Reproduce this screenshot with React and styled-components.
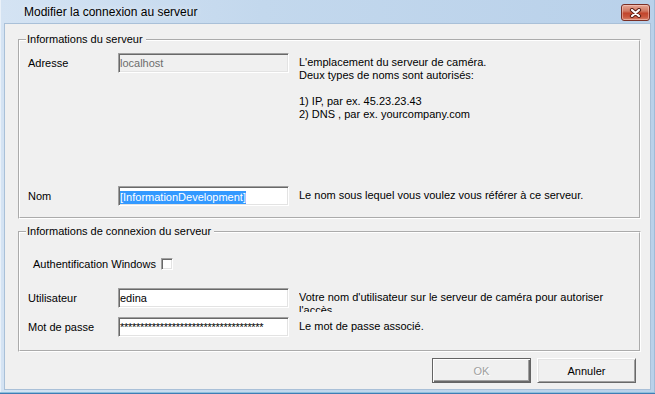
import React from "react";
import styled, { createGlobalStyle } from "styled-components";

const GlobalStyle = createGlobalStyle`
  html, body {
    margin: 0;
    padding: 0;
    background: #fff;
  }
  body {
    font-family: "Liberation Sans", Arial, sans-serif;
    font-size: 11px;
    color: #000;
  }
  * {
    box-sizing: border-box;
  }
`;

function CloseGlyph() {
  return (
    <svg width="13" height="10" viewBox="0 0 13 10">
      <path d="M3 2 L10 8 M10 2 L3 8" stroke="#5a1d14" strokeWidth="4.2" strokeLinecap="round" fill="none" />
      <path d="M3 2 L10 8 M10 2 L3 8" stroke="#ffffff" strokeWidth="2.2" strokeLinecap="round" fill="none" />
    </svg>
  );
}

function App() {
  return (
    <>
      <GlobalStyle />
      <Window>
        <TitleBar>
          <Title>Modifier la connexion au serveur</Title>
          <CloseButton>
            <CloseGlyph />
          </CloseButton>
        </TitleBar>

        <Client>
          <GroupBox $height={186}>
            <Legend>Informations du serveur</Legend>
            <GroupBody $top={7}>
              <Row>
                <Label>Adresse</Label>
                <Field $disabled>localhost</Field>
                <Desc>
                  L'emplacement du serveur de caméra.
                  <br />
                  Deux types de noms sont autorisés:
                  <br />
                  <br />
                  1) IP, par ex. 45.23.23.43
                  <br />
                  2) DNS , par ex. yourcompany.com
                </Desc>
              </Row>
              <Row $gap={65}>
                <Label>Nom</Label>
                <Field>
                  <Selection>[InformationDevelopment]</Selection>
                </Field>
                <Desc>Le nom sous lequel vous voulez vous référer à ce serveur.</Desc>
              </Row>
            </GroupBody>
          </GroupBox>

          <GroupBox $height={127}>
            <Legend>Informations de connexion du serveur</Legend>
            <GroupBody $top={19}>
              <CheckRow>
                Authentification Windows
                <Check />
              </CheckRow>
              <Row $gap={18}>
                <Label>Utilisateur</Label>
                <Field>edina</Field>
                <Desc $clip>
                  Votre nom d'utilisateur sur le serveur de caméra pour autoriser l'accès
                </Desc>
              </Row>
              <Row $gap={5}>
                <Label>Mot de passe</Label>
                <Field $secret>{"*".repeat(36)}</Field>
                <Desc>Le mot de passe associé.</Desc>
              </Row>
            </GroupBody>
          </GroupBox>

          <ButtonRow>
            <Button $default disabled>
              OK
            </Button>
            <Button>Annuler</Button>
          </ButtonRow>
        </Client>
      </Window>
    </>
  );
}

export default App;

const Window = styled.div`
  width: 655px;
  height: 394px;
  display: flex;
  flex-direction: column;
  background: linear-gradient(to right, #d4e3f3 0%, #c3d8ed 40%, #b9d1ea 100%);
  box-shadow: inset 0 -1px 0 #3f7db5, inset 0 -2px 0 #8fc0dc, inset 1px 0 0 #eaf1f9,
    inset -1px 0 0 #9fbcd8;
`;

const TitleBar = styled.div`
  height: 24px;
  flex-shrink: 0;
  display: flex;
  align-items: flex-start;
  padding: 0 5px 0 24px;
`;

const Title = styled.div`
  flex: 1;
  font-size: 12px;
  line-height: 25px;
  color: #000;
  text-shadow: 0 0 6px rgba(255, 255, 255, 0.8);
`;

const CloseButton = styled.div`
  width: 29px;
  height: 17px;
  margin-top: 4px;
  display: flex;
  align-items: center;
  justify-content: center;
  border: 1px solid #7a2f25;
  border-radius: 3px;
  background: linear-gradient(#e6a796 0%, #d07862 40%, #c2452c 55%, #c9583f 80%, #d9866f 100%);
  box-shadow: inset 0 0 0 1px rgba(255, 220, 210, 0.45);
`;

const Client = styled.div`
  flex: 1;
  margin: 0 5px 5px 5px;
  display: flex;
  flex-direction: column;
  gap: 6px;
  padding: 9px 9px 6px 13px;
  background: #f0f0f0;
  box-shadow: 0 0 0 1px #a9c0d8;
`;

const GroupBox = styled.fieldset`
  margin: 0;
  padding: 0;
  height: ${(p) => p.$height}px;
  flex-shrink: 0;
  min-width: 0;
  border: 2px groove #ffffff;
`;

const Legend = styled.legend`
  margin-left: 6px;
  padding: 0 3px 0 1px;
  line-height: 13px;
  font-size: 11px;
`;

const GroupBody = styled.div`
  display: flex;
  flex-direction: column;
  padding: ${(p) => p.$top}px 6px 0 8px;
`;

const Row = styled.div`
  display: flex;
  align-items: flex-start;
  margin-top: ${(p) => p.$gap || 0}px;
`;

const Label = styled.div`
  width: 90px;
  flex-shrink: 0;
  line-height: 20px;
  white-space: nowrap;
`;

const Field = styled.div`
  width: 171px;
  height: 20px;
  flex-shrink: 0;
  border: 1px solid;
  border-color: #a0a0a0 #ffffff #ffffff #a0a0a0;
  box-shadow: inset 1px 1px 0 #696969, inset -1px -1px 0 #e3e3e3;
  background: ${(p) => (p.$disabled ? "#f0f0f0" : "#ffffff")};
  color: ${(p) => (p.$disabled ? "#6d6d6d" : "#000")};
  padding: 0 2px 0 1px;
  line-height: 18px;
  white-space: nowrap;
  overflow: hidden;
  letter-spacing: ${(p) => (p.$secret ? "-0.3px" : "normal")};
`;

const Selection = styled.span`
  display: inline-block;
  vertical-align: middle;
  line-height: 13px;
  background: #3399ff;
  color: #fff;
`;

const Desc = styled.div`
  flex: 1;
  margin-left: 10px;
  padding-top: 3px;
  line-height: 13px;
  max-height: ${(p) => (p.$clip ? "24px" : "none")};
  overflow: hidden;
`;

const CheckRow = styled.label`
  display: flex;
  align-items: center;
  height: 13px;
  padding-left: 5px;
  white-space: nowrap;
`;

const Check = styled.span`
  width: 12px;
  height: 12px;
  margin-left: 5px;
  background: #fff;
  border: 1px solid;
  border-color: #a0a0a0 #ffffff #ffffff #a0a0a0;
  box-shadow: inset 1px 1px 0 #696969, inset -1px -1px 0 #e3e3e3;
`;

const ButtonRow = styled.div`
  display: flex;
  justify-content: flex-end;
  gap: 6px;
  padding-right: 5px;
`;

const Button = styled.button`
  width: 99px;
  height: 25px;
  padding: 0;
  font-family: "Liberation Sans", Arial, sans-serif;
  font-size: 11px;
  background: #f0f0f0;
  color: ${(p) => (p.disabled ? "#a0a0a0" : "#000")};
  text-shadow: ${(p) => (p.disabled ? "1px 1px 0 #fff" : "none")};
  border: 1px solid;
  border-color: ${(p) => (p.$default ? "#646464" : "#ffffff #696969 #696969 #ffffff")};
  box-shadow: ${(p) =>
    p.$default
      ? "inset 1px 1px 0 #fff, inset -1px -1px 0 #696969, inset -2px -2px 0 #a0a0a0"
      : "inset 1px 1px 0 #e3e3e3, inset -1px -1px 0 #a0a0a0"};
`;
